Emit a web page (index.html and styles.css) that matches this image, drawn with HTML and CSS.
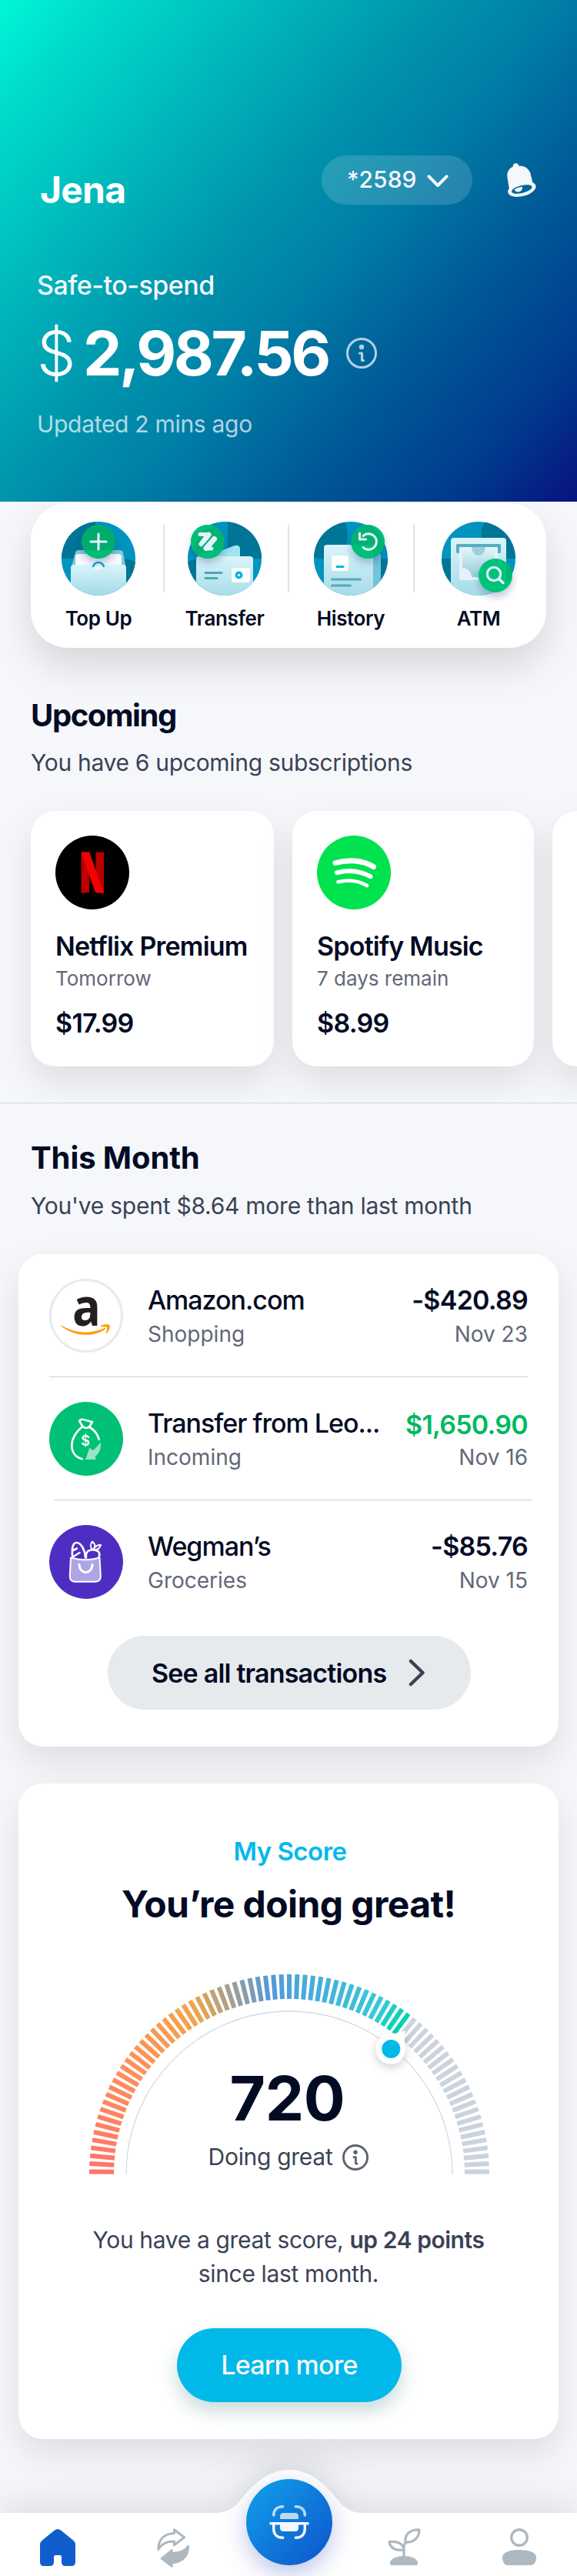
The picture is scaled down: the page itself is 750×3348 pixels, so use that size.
FILE: index.html
```
<!DOCTYPE html>
<html lang="en">
<head>
<meta charset="utf-8">
<title>Home</title>
<link rel="stylesheet" href="styles.css">
</head>
<body>
<header class="hero">
  <div class="hero-top">
    <h1 class="name">Jena</h1>
    <div class="account">
      <span class="account-num">*2589</span>
      <svg width="28" height="17" viewBox="0 0 28 17" fill="none" stroke="#f5f7fa" stroke-width="4" stroke-linecap="round" stroke-linejoin="round"><path d="M2.5 2.3 14 14 25.5 2.3"/></svg>
    </div>
    <svg class="bell" width="38" height="44" viewBox="0 0 38 44">
      <path d="M8 4.5C7.200 1.800 9 .6 11.200.3c2-.3 3.800.5 4 3.300C24 3.400 29.500 8 31 15.500l2.500 11L3 34 .6 19.500C-.8 12 2.500 6.800 8 4.500Z" fill="#f5f7fa"/>
      <g transform="rotate(-14 19.300 33.800)"><ellipse cx="19.300" cy="33.800" rx="18.600" ry="9.200" fill="#f5f7fa"/><ellipse cx="19.300" cy="34" rx="13.500" ry="5" fill="#00649b"/></g>
      <path d="M9.500 34.500c3-2 6.500-3.200 10.500-3.700.3 3.200-1.300 5.900-4.300 6.500-2.800.5-5.200-.6-6.200-2.800Z" fill="#f5f7fa"/>
    </svg>
  </div>
  <p class="safe">Safe-to-spend</p>
  <div class="amount">
    <span class="currency">$</span><span class="balance">2,987.56</span>
    <svg class="info" width="40" height="40" viewBox="0 0 40 40" fill="none" stroke="currentColor"><circle cx="20" cy="20" r="18.500" stroke-width="3"/><circle cx="20" cy="12" r="3.200" fill="currentColor" stroke="none"/><path d="M17.500 20h3v9.500h2" stroke-width="3.200" stroke-linecap="round" stroke-linejoin="round"/></svg>
  </div>
  <p class="updated">Updated 2 mins ago</p>
</header>

<svg class="defs" width="0" height="0">
  <defs>
    <clipPath id="disc"><circle cx="48" cy="48" r="48"/></clipPath>
    <linearGradient id="ice" x1="0" y1="0" x2="0" y2="1"><stop offset="0" stop-color="#d9f5fb"/><stop offset="1" stop-color="#a3d9e6"/></linearGradient>
    <linearGradient id="note" x1="0" y1="0" x2="0" y2="1"><stop offset="0" stop-color="#e3f7fb"/><stop offset="1" stop-color="#95cbd9"/></linearGradient>
    <filter id="soft" x="-60%" y="-60%" width="220%" height="220%"><feDropShadow dx="0" dy="6" stdDeviation="5" flood-color="#1a2f80" flood-opacity=".28"/></filter>
  </defs>
</svg>

<nav class="actions">
  <a class="action a1">
    <svg width="96" height="96" viewBox="0 0 96 96">
      <g clip-path="url(#disc)">
        <path fill="#0094c0" d="M0 0h96v96H0z"/>
        <path fill="#007596" d="M0 0h44v48H0zM80 49c6-1 12 1 18 5v44H80z"/>
        <path fill="#7fcbd8" d="M12 62 18 40q1-3 4-3h54q3 0 4 3l4 22z"/>
        <rect x="18" y="42" width="60" height="30" rx="4" fill="#f7f9fd"/>
        <path fill="url(#ice)" d="M12 60q0-4 4-4h64q4 0 4 4v36H12z"/>
        <path fill="#f3f6fb" d="M40 57c2 8 14 8 16 0z"/>
        <path fill="none" stroke="#00aedb" stroke-width="2.600" d="M41 59c2-8 12-8 14 0"/>
      </g>
      <g filter="url(#soft)"><circle cx="48" cy="26" r="22" fill="#00ac6c"/></g>
      <path fill="#00c37a" d="M29 37a22 22 0 0 0 38 0z" opacity=".7"/>
      <path d="M48 16v20M38 26h20" stroke="#e6f3fc" stroke-width="3" stroke-linecap="round"/>
    </svg>
    <span>Top Up</span>
  </a>
  <i class="sep"></i>
  <a class="action a2">
    <svg class="over" width="96" height="96" viewBox="0 0 96 96">
      <g clip-path="url(#disc)">
        <path fill="#0094c0" d="M0 0h96v96H0z"/>
        <path fill="#007596" d="M52 0h44v48H52zM0 52c6-3 9-4 14-3v47H0z"/>
        <path fill="#a0e4f1" d="M22 46 60 31.500q7-2.500 8 3.500v14z"/>
        <rect x="11" y="45" width="74" height="56" rx="4" fill="url(#ice)"/>
        <path d="M23 66.500h21M23 73.500h15" stroke="#4fa5b8" stroke-width="3" stroke-linecap="round"/>
        <rect x="57" y="60" width="24" height="19" rx="3.500" fill="#fff"/>
        <circle cx="66.500" cy="69.500" r="3.300" fill="none" stroke="#00b5e6" stroke-width="3.400"/>
      </g>
      <g filter="url(#soft)"><circle cx="26" cy="26" r="22" fill="#00b273"/></g>
      <path fill="#00c37a" d="M4 26A22 22 0 0 1 35 6C18 10 10 22 7 37.500A22 22 0 0 1 4 26ZM12 43a22 22 0 0 0 34-8C36 37 22 41 12 43z" opacity=".8"/>
      <path d="M16 16.500h11M25 35h6" stroke="#e6f3fc" stroke-width="5" stroke-linecap="round"/>
      <path d="M27 17 18 29M34.500 22.500 24 34.500" stroke="#e6f3fc" stroke-width="7" stroke-linecap="round"/>
      <path d="m18.500 33 13-14" stroke="#00b273" stroke-width="1.200"/>
    </svg>
    <span>Transfer</span>
  </a>
  <i class="sep"></i>
  <a class="action a3">
    <svg class="over" width="96" height="96" viewBox="0 0 96 96">
      <g clip-path="url(#disc)">
        <path fill="#0094c0" d="M0 0h96v96H0z"/>
        <path fill="#007596" d="M0 0h40c5 9 5 21 1 34L14 48C9 49 4 47 0 46zM86 48h10v48H86z"/>
        <rect x="60" y="40" width="27" height="60" rx="5" fill="#70c5d6"/>
        <rect x="13" y="30" width="64" height="70" rx="4" fill="url(#ice)"/>
        <rect x="23" y="44" width="22" height="20" rx="2" fill="#fff"/>
        <path d="M30 58.500h8" stroke="#00b5e6" stroke-width="3" stroke-linecap="round"/>
        <path d="M23.500 75h37M23.500 83h24" stroke="#56aabb" stroke-width="3" stroke-linecap="round"/>
      </g>
      <g filter="url(#soft)"><circle cx="70" cy="26" r="22" fill="#00b273"/></g>
      <path fill="#00c37a" d="M71 4a22 22 0 0 1 20.500 24C87 17 81 9.500 71 4ZM49 30h28v17A22 22 0 0 1 49 30z" opacity=".8"/>
      <path d="M64 18.500a10.300 10.300 0 1 1 0 15M59.500 15v8h8" fill="none" stroke="#e6f3fc" stroke-width="3" stroke-linecap="round" stroke-linejoin="round"/>
    </svg>
    <span>History</span>
  </a>
  <i class="sep"></i>
  <a class="action a4">
    <svg class="over" width="96" height="96" viewBox="0 0 96 96">
      <g clip-path="url(#disc)">
        <path fill="#0094c0" d="M0 0h96v96H0z"/>
        <path fill="#007596" d="M56 0c-5 8-5 17-3 26l31 22h12V0zM0 48h14v48H0z"/>
        <rect x="12" y="21" width="72" height="80" rx="4" fill="url(#ice)"/>
        <rect x="19" y="29" width="58" height="12" rx="1.500" fill="#56aebf"/>
        <path d="M23 33h50v43H26q-3 0-3-3z" fill="#e6f1fd"/>
        <path d="M27 33h42v39H27z" fill="url(#note)"/>
        <path d="M39 33a9 11 0 0 0 18 0z" fill="#a0cfdc"/>
        <path d="M27 60a12 12 0 0 1 12 12v1H26z" fill="#e6f1fd"/>
      </g>
      <g filter="url(#soft)"><circle cx="70" cy="70" r="22" fill="#00c37a"/></g>
      <path fill="#00b273" d="M84 53a22 22 0 0 1 7.800 14C90 74 86 80 84 82z" opacity=".8"/>
      <g fill="none" stroke="#e6f3fc" stroke-width="3" stroke-linecap="round"><circle cx="68" cy="68" r="8.700"/><path d="m74.500 74.500 5.500 5" stroke-width="3.500"/></g>
    </svg>
    <span>ATM</span>
  </a>
</nav>

<section class="upcoming">
  <h2>Upcoming</h2>
  <p class="sub">You have 6 upcoming subscriptions</p>
  <div class="subs">
    <article class="card sub-card">
      <svg width="96" height="96" viewBox="0 0 96 96"><circle cx="48" cy="48" r="48"/><path fill="#b90000" d="M33.500 21.500h10.700V74l-10.700.8zM52.500 21.500H63v53l-10.500-.8z"/><path fill="#f50000" d="M33.500 21.500h10.800L63 74.900 52 74z"/></svg>
      <h3>Netflix Premium</h3><p class="when">Tomorrow</p><p class="price">$17.99</p>
    </article>
    <article class="card sub-card second">
      <svg width="96" height="96" viewBox="0 0 96 96"><circle cx="48" cy="48" r="48" fill="#00e24e"/><g fill="none" stroke="#fff" stroke-linecap="round"><path d="M24 35.500c17-4.800 36-3.300 49.500 5" stroke-width="7"/><path d="M26 48.200c15-4 30-2.500 43.500 5" stroke-width="6"/><path d="M27.500 60.300c13-3.200 26-2 37.500 4.700" stroke-width="4.600"/></g></svg>
      <h3>Spotify Music</h3><p class="when">7 days remain</p><p class="price">$8.99</p>
    </article>
    <article class="card sub-card"></article>
  </div>
</section>

<section class="month">
  <h2>This Month</h2>
  <p class="sub">You've spent $8.64 more than last month</p>
</section>
<section class="card txns">
  <div class="txn">
    <svg class="over" width="96" height="96" viewBox="0 0 96 96"><circle cx="48" cy="48" r="46.500" fill="#fff" stroke="#e7ebee" stroke-width="3"/><text class="amzn" transform="translate(30 60.500) scale(.9 1)">a</text><path fill="#ff9d00" d="M16.500 61c18 10.500 37 11 55.500 3 1.500-.5 2 .5.500 1.700C59 76 33 75.500 16 62c-.5-.5 0-1.300.5-1z"/><path fill="#ff9d00" d="M67 61c4-2 8-2.200 11.500-1.200 1 3.500-.8 8.500-4 11.200-.7.500-1.300.2-1-.5 1.200-3 2-5.500 1.500-7.700-2.300-.6-4.800-.8-7.500-.6-.8 0-1.200-.7-.5-1.200z"/></svg>
    <div class="txn-main"><h3>Amazon.com</h3><p>Shopping</p></div>
    <div class="txn-side"><b>-$420.89</b><p>Nov 23</p></div>
  </div>
  <hr>
  <div class="txn">
    <svg width="96" height="96" viewBox="0 0 96 96"><circle cx="48" cy="48" r="48" fill="#00c075"/><g fill="none" stroke="#fff" stroke-width="2.700" stroke-linecap="round" stroke-linejoin="round"><path d="M43.500 32 39.500 25.500c-.5-2 1.500-2.800 4-2.700 4 .2 6 2.700 12.500 3.200L52 32.500c-2.500 1.800-6 1.600-8.500-.5ZM43.500 32C34 39 29.300 49 29.300 56.500c0 9 5 15.500 13.500 17.700M52 32.500c6.500 4 11 9.500 12.700 16.300"/></g><text class="bag-dollar" x="47.200" y="57" text-anchor="middle">$</text><path fill="#99e3c4" d="M67 52.500c.6 8.500-2 14.500-7.500 18.500l1.500 3.800-14 .2 5.500-15.500 4 3.500c4-2.500 6.500-6 10.500-10.500z"/></svg>
    <div class="txn-main"><h3>Transfer from Leo...</h3><p>Incoming</p></div>
    <div class="txn-side in"><b>$1,650.90</b><p>Nov 16</p></div>
  </div>
  <hr class="shift">
  <div class="txn">
    <svg width="96" height="96" viewBox="0 0 96 96"><circle cx="48" cy="48" r="48" fill="#4e2ec2"/><g fill="none" stroke="#fff" stroke-width="2.600" stroke-linecap="round" stroke-linejoin="round"><path fill="#aea5e5" stroke-width="2" d="M28 42.500 26.800 66c-.2 5 2 7.700 6 7.700h27.500c4.500 0 6.700-3 6.500-7.700L65.500 42.500c-12 3.500-25 3.500-37.500 0Z"/><path stroke-width="3" d="M39 51.500c.5 13.500 16.500 13.500 17 0"/><path d="M30 40.500c-.5-9 0-17.500 5.500-17.500 6 0 11 9.500 11.500 19.500M31 33l5-2.500M31.500 41l8-5M48 42.500c-1-5 1.500-9.500 5-9.500 3-2 8 0 11 1.500 1.500 2 1.500 5 .5 7"/><path stroke-width="2" d="M56 31.500c-3-3-2.500-7 0-10 3.500 2.500 4 6 2 9.500 2-3.500 5-5.500 9-5-1 4-4.500 7-9 6"/></g></svg>
    <div class="txn-main"><h3>Wegman’s</h3><p>Groceries</p></div>
    <div class="txn-side"><b>-$85.76</b><p>Nov 15</p></div>
  </div>
  <a class="btn-all"><span>See all transactions</span><svg width="22" height="36" viewBox="0 0 22 36" fill="none" stroke="#3a4256" stroke-width="4.500" stroke-linecap="round" stroke-linejoin="round"><path d="M3 3 18.500 18 3 33"/></svg></a>
</section>

<section class="card score">
  <p class="eyebrow">My Score</p>
  <h2 class="score-title">You’re doing great!</h2>
  <div class="gauge">
    <svg width="522" height="282" viewBox="-261 -268 522 282">
      <g id="ticks"></g>
      <path d="M-212 0A212 212 0 0 1 212 0" fill="none" stroke="#d3dae0" stroke-width="1.300"/>
      <g class="marker">
        <path d="M151-187 149.500-174C154-160 148-143 132.400-143A20 20 0 1 1 132-183C140-183 146-185 151-187Z" fill="#fff"/>
        <circle cx="132.300" cy="-163" r="12" fill="#00b9e9"/>
      </g>
    </svg>
    <div class="gauge-text">
      <strong>720</strong>
      <div class="label">Doing great
        <svg width="34" height="34" viewBox="0 0 40 40" fill="none" stroke="#5c6373"><circle cx="20" cy="20" r="18.300" stroke-width="3.400"/><circle cx="20" cy="12" r="3.200" fill="#5c6373" stroke="none"/><path d="M17.500 19.500h3v10h2" stroke-width="3.200" stroke-linecap="round" stroke-linejoin="round"/></svg>
      </div>
    </div>
  </div>
  <p class="note">You have a great score, <b>up 24 points</b><br>since last month.</p>
  <a class="btn-learn">Learn more</a>
</section>

<footer class="tabs">
  <svg class="tabs-bg" width="750" height="138" viewBox="0 0 750 138"><path fill="#fff" d="M0 56H280C296 56 305 49 313 39 328 20 348 0 376 0S424 20 439 39C447 49 456 56 472 56H750V138H0Z"/></svg>
  <div class="scan">
    <svg width="52" height="46" viewBox="-26 -23 52 46" fill="none" stroke="#f5f7fa" stroke-width="3.600" stroke-linecap="round"><g opacity=".75"><path d="M-20.300-9c0-7 4.500-11.300 12-11.300M20.300-9c0-7-4.500-11.300-12-11.300"/><path d="M-12-4v-3.500q0-4.500 4.500-4.500h15Q12-12 12-7.500V-4z" fill="#f5f7fa" stroke="none"/></g><path d="M-24.200 1.800h48.400M-20.300 4v4.500c0 7.500 4.500 11.800 12 11.800M20.300 4v4.500c0 7.500-4.500 11.800-12 11.800" stroke-width="3.400"/><path d="M-12 2v5.500q0 4.500 4.500 4.500h15q4.500 0 4.500-4.500V2z" fill="#f5f7fa" stroke="none"/></svg>
  </div>
  <svg class="tab t1" width="46" height="48" viewBox="0 0 46 48"><path fill="#105ecb" d="M19 1.500q4-3 8 0L43 14.500q3 2.500 3 6V43q0 5-5 5h-8q-5 0-5-5v-7q0-2-2-2h-6q-2 0-2 2v7q0 5-5 5H5q-5 0-5-5V20.500q0-3.500 3-6z"/></svg>
  <svg class="tab t2" width="42" height="51" viewBox="0 0 42 51" stroke="#aeb8c1" stroke-linejoin="round" stroke-linecap="round"><path fill="none" stroke-width="3" d="M22.500 1.800 35.500 11.800 22.500 21.800v-4.700C13 17 6 20 1.700 27.500 1.700 15 9 7 22.500 6.500z"/><path fill="#aeb8c1" stroke-width="2.600" d="M19.300 49.500 6 39.200 19.300 28.500v3.700C29 32.500 36 30 40.700 23 41 36 33 44.500 19.300 45z"/></svg>
  <svg class="tab t3" width="43" height="48" viewBox="0 0 43 48" fill="none" stroke="#aeb8c1" stroke-width="3.200" stroke-linejoin="round"><path d="M21 37V24c0-3 1.500-4 2-6C22 7 29.500 1.500 41 1.800 41 11 35 19 23 18M21 27c-1.500-7-7.500-10.500-19-9.500C3 25 9 29.500 20 28"/><path fill="#aeb8c1" stroke="none" d="M3 44c2-5 9-8 18-8s16 3 18 8q1 4-3 4H6q-4 0-3-4z"/></svg>
  <svg class="tab t4" width="44" height="48" viewBox="0 0 44 48"><circle cx="22" cy="12" r="10.300" fill="none" stroke="#aeb8c1" stroke-width="3.400"/><path fill="#aeb8c1" d="M0 38c0-7 10-10 22-10s22 3 22 10c0 6-3 10-7 10H7c-4 0-7-4-7-10z"/></svg>
</footer>
<script src="gauge.js"></script>
</body>
</html>
```
FILE: styles.css
```
* { box-sizing: border-box; margin: 0; padding: 0; }
body { width: 750px; background: #f5f7fa; color: #030b23; font-family: Inter, "Liberation Sans", sans-serif; overflow-x: hidden; }
svg { display: block; flex: none; }
.defs { position: absolute; }
.over { overflow: visible; }

.hero { height: 652px; padding: 202px 48px 0; color: #fff; background: linear-gradient(131deg, #00f7d7 0%, #00dcca 10%, #0094ad 43%, #007fa7 55%, #005a97 71%, #003b8e 87%, #08127f 100%); }
.hero-top { display: flex; align-items: flex-start; height: 74px; }
.name { font-size: 48px; line-height: 58px; font-weight: 700; letter-spacing: -.8px; margin: 16px auto 0 4px; }
.account { width: 196px; height: 64px; border-radius: 32px; background: rgba(255,255,255,.15); display: flex; align-items: center; gap: 14px; padding: 0 0 2px 33px; color: #f5f7fa; }
.account svg { margin-top: 5px; }
.account-num { font-size: 30px; font-weight: 500; }
.bell { margin: 10px 5px 0 45px; }
.safe { margin-top: 75px; font-size: 34px; line-height: 40px; font-weight: 500; letter-spacing: -.5px; color: #f5f7fa; }
.amount { margin-top: 20px; display: flex; align-items: center; height: 96px; font-size: 80px; line-height: 96px; }
.currency { width: 60px; font-weight: 300; }
.balance { width: 342px; font-weight: 700; letter-spacing: -3.4px; white-space: nowrap; }
.info { color: rgba(255,255,255,.7); }
.updated { margin-top: 26px; font-size: 30px; line-height: 36px; letter-spacing: -.3px; color: rgba(255,255,255,.7); }

.actions { margin: 2px 40px 0; height: 188px; padding: 24px 0 0 4px; display: flex; border-radius: 48px; background: #fff; box-shadow: 0 24px 50px rgba(0,0,0,.13); }
.action { display: flex; flex-direction: column; align-items: center; gap: 14px; font-size: 26px; line-height: 32px; font-weight: 600; letter-spacing: -.4px; }
.a1 { width: 168px; }
.a2 { width: 156px; margin-right: 4px; }
.a3 { width: 160px; margin-right: 1px; }
.a4 { width: 166px; }
.sep { width: 2px; height: 88px; margin-top: 4px; background: #dfe3e7; }

h2 { font-size: 40px; line-height: 48px; font-weight: 700; letter-spacing: -1.4px; }
.sub { margin-top: 19px; font-size: 30px; line-height: 36px; letter-spacing: -.3px; color: #3a4256; }
.card { background: #fff; border-radius: 32px; box-shadow: 0 20px 48px rgba(0,0,0,.1); }

.upcoming { height: 592px; padding: 64px 0 0 40px; border-bottom: 1px solid #d3d7dc; overflow: hidden; }
.subs { display: flex; gap: 24px; margin-top: 45px; }
.sub-card { flex: none; width: 316px; height: 332px; padding: 32px; }
.sub-card.second { width: 314px; }
.sub-card h3, .price { font-size: 34px; line-height: 40px; font-weight: 600; letter-spacing: -.8px; white-space: nowrap; }
.sub-card h3 { margin-top: 28px; }
.when { margin-top: 6px; font-size: 26px; line-height: 32px; color: #626878; }
.price { margin-top: 22px; letter-spacing: -.7px; }

.month { padding: 47px 40px 45px; }
.month h2 { letter-spacing: -.1px; }
.month .sub { margin-top: 20px; letter-spacing: -.25px; }
.txns { margin: 0 24px; height: 640px; padding: 32px 40px 0; }
.txn { display: flex; height: 96px; }
.txn-main { margin-left: 32px; padding-top: 7px; flex: 1; white-space: nowrap; }
.txn h3 { font-size: 34px; line-height: 42px; font-weight: 500; letter-spacing: -1px; }
.txn b { display: block; font-size: 34px; line-height: 42px; font-weight: 600; letter-spacing: -.75px; }
.txn p { margin-top: 6px; font-size: 28px; line-height: 34px; color: #626878; }
.txn-side { padding-top: 7px; text-align: right; }
.txn .in { padding-top: 9px; }
.in b { color: #00b85f; }
.txn .in p { margin-top: 4px; }
.txns hr { border: 0; height: 1px; margin: 31px 0 32px; background: #ccd5dc; }
.txns hr.shift { margin-left: 6px; margin-right: -6px; }
.amzn { font: 700 68px "Open Sans", sans-serif; fill: #231f20; }
.bag-dollar { font: 600 18px Inter, sans-serif; fill: #fff; }
.btn-all { width: 472px; height: 96px; margin: 48px 0 0 76px; padding-left: 57px; border-radius: 48px; background: #e7eaed; display: flex; align-items: center; font-size: 34px; font-weight: 600; letter-spacing: -.8px; }
.btn-all span { width: 334px; white-space: nowrap; }

.score { margin: 48px 24px 0; height: 852px; padding-top: 68px; display: flex; flex-direction: column; align-items: center; text-align: center; }
.eyebrow { font-size: 33px; line-height: 40px; font-weight: 600; letter-spacing: -.5px; color: #00b9e9; margin-left: 4px; }
.score-title { margin-top: 20px; font-size: 48px; line-height: 58px; letter-spacing: -.6px; }
.gauge { position: relative; width: 522px; height: 270px; margin: 54px 0 0 2px; }
.gauge svg { overflow: visible; }
.marker { filter: drop-shadow(0 4px 6px rgba(0,0,0,.18)); }
.gauge-text { position: absolute; inset: 121px 0 auto; display: flex; flex-direction: column; align-items: center; }
.gauge-text strong { font-size: 80px; line-height: 96px; font-weight: 700; letter-spacing: -.3px; margin-right: 5px; }
.label { margin: 10px 2px 0 0; display: flex; gap: 13px; font-size: 30px; line-height: 36px; letter-spacing: -.3px; color: #3a4256; }
.label svg { margin-top: 2px; }
.note { margin-top: 61px; font-size: 30px; line-height: 44px; letter-spacing: -.35px; color: #3a4256; }
.note b { font-weight: 600; letter-spacing: -.45px; }
.btn-learn { width: 292px; height: 96px; margin: 49px 0 0 2px; border-radius: 48px; background: #00b9e9; color: #f5f7fa; font-size: 34px; line-height: 96px; font-weight: 500; letter-spacing: -.75px; box-shadow: 0 12px 24px rgba(0,90,100,.22); }

.tabs { position: relative; height: 138px; margin-top: 40px; display: flex; align-items: flex-start; padding: 76px 53px 0 52px; }
.tabs-bg { position: absolute; left: 0; top: 0; overflow: visible; filter: drop-shadow(0 -12px 24px rgba(0,0,0,.1)); }
.scan { position: absolute; left: 320px; top: 12px; width: 112px; height: 112px; border-radius: 50%; background: linear-gradient(135deg, #109ae9 10%, #0e5bcd 90%); box-shadow: 0 10px 30px rgba(60,80,190,.35); display: flex; align-items: center; justify-content: center; }
.tab { position: relative; }
.t1 { margin: 1px 106px 0 0; }
.t2 { margin-right: 258px; }
.t3 { margin-right: 106px; }
```
FILE: gauge.js
```
// 79 radial ticks over a half circle; ticks past the score stay grey
const stops = [[0, [255,116,105]], [38, [255,146,86]], [60, [240,165,72]], [84, [85,152,218]], [90, [76,162,220]], [118, [55,202,216]], [126.6, [0,211,174]]];
const colorAt = a => {
  for (let i = 1; i < stops.length; i++) {
    const [a0, c0] = stops[i - 1], [a1, c1] = stops[i];
    if (a <= a1) return `rgb(${c0.map((v, k) => Math.round(v + (c1[k] - v) * (a - a0) / (a1 - a0)))})`;
  }
  return '#cbd4dc';
};
const g = document.getElementById('ticks');
for (let i = 0; i < 79; i++) {
  const a = 90 + (i - 39) * 2.2875;
  const r = document.createElementNS('http://www.w3.org/2000/svg', 'rect');
  r.setAttribute('x', -260);
  r.setAttribute('y', -3);
  r.setAttribute('width', 32);
  r.setAttribute('height', 6);
  r.setAttribute('fill', colorAt(a));
  r.setAttribute('transform', `rotate(${a})`);
  g.appendChild(r);
}
```
